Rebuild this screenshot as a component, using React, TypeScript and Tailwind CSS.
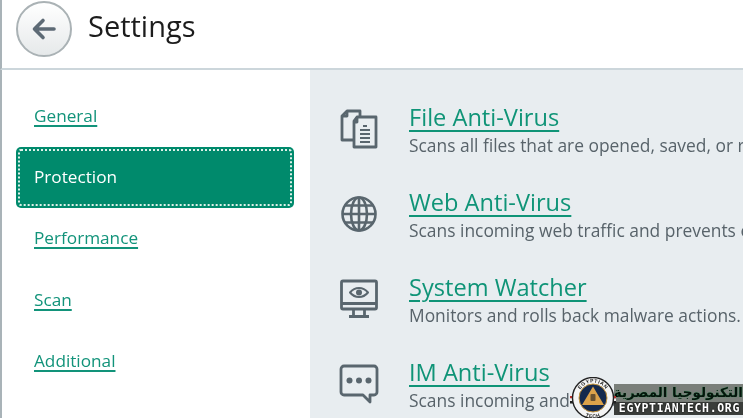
import React from "react";

const font = { fontFamily: '"Open Sans", "Noto Sans", sans-serif' };

function FileIcon() {
  return (
    <svg width="40" height="40" viewBox="0 0 40 40" fill="none" stroke="#59666e" strokeWidth="2.8" strokeLinejoin="round">
      <path d="M14 31H3V7l5-5h13v5" />
      <path d="M8 2v5H3" />
      <path d="M18 8h19v30H15V12z" fill="#e9eef1" />
      <path d="M18 8v5h-3" />
      <path d="M24 17h4M21 21h10M21 25h10M21 29h10M21 33h10" strokeWidth="1.8" />
    </svg>
  );
}
function GlobeIcon() {
  return (
    <svg width="40" height="40" viewBox="0 0 40 40" fill="none" stroke="#59666e" strokeWidth="2.6">
      <circle cx="20" cy="20" r="16.5" />
      <ellipse cx="20" cy="20" rx="8" ry="16.5" />
      <path d="M20 3.5v33M3.5 20h33M6 11.5h28M6 28.5h28" />
    </svg>
  );
}
function MonitorIcon() {
  return (
    <svg width="40" height="40" viewBox="0 0 40 40" fill="none" stroke="#59666e" strokeWidth="2.8" strokeLinejoin="round">
      <rect x="2.5" y="2" width="35" height="28" rx="1.5" />
      <path d="M3 24.5h34M14.5 30v7M25.5 30v7M10 37.5h20" />
      <path d="M11 13.5c5-6 13-6 18 0-5 6-13 6-18 0z" strokeWidth="2" />
      <circle cx="20" cy="13.5" r="3" fill="#59666e" stroke="none" />
    </svg>
  );
}
function ChatIcon() {
  return (
    <svg width="40" height="40" viewBox="0 0 40 40" fill="none" stroke="#59666e" strokeWidth="2.8" strokeLinejoin="round">
      <path d="M5 2h30a3 3 0 0 1 3 3v23a3 3 0 0 1-3 3h-4v7l-7-7H5a3 3 0 0 1-3-3V5a3 3 0 0 1 3-3z" />
      <circle cx="10.5" cy="16.5" r="3" fill="#59666e" stroke="none" />
      <circle cx="20" cy="16.5" r="3" fill="#59666e" stroke="none" />
      <circle cx="29.5" cy="16.5" r="3" fill="#59666e" stroke="none" />
    </svg>
  );
}

function Logo() {
  return (
    <svg width="46" height="42" viewBox="0 0 46 42">
      <rect x="0" y="19" width="46" height="2.5" fill="#b8322e" />
      <rect x="0" y="21.5" width="46" height="2.5" fill="#eee" />
      <rect x="0" y="24" width="46" height="2.5" fill="#222" />
      <circle cx="23" cy="21" r="20.5" fill="#f4f4f4" stroke="#222" strokeWidth="1.4" />
      <defs>
        <path id="ringTop" d="M7.5 21a15.5 15.5 0 0 1 31 0" />
        <path id="ringBottom" d="M6 24a17 17 0 0 0 34 0" />
      </defs>
      <text fontSize="5" fontWeight="700" fill="#222" letterSpacing="0.6" fontFamily="Liberation Sans, sans-serif">
        <textPath href="#ringTop" startOffset="50%" textAnchor="middle">EGYPTIAN</textPath>
      </text>
      <text fontSize="5" fontWeight="700" fill="#222" letterSpacing="0.6" fontFamily="Liberation Sans, sans-serif">
        <textPath href="#ringBottom" startOffset="50%" textAnchor="middle">TECH</textPath>
      </text>
      <circle cx="23" cy="21" r="14" fill="#14294d" stroke="#c9973d" strokeWidth="1" />
      <path d="M23 9.5 34 28H12z" fill="#dca24a" />
      <rect x="20.5" y="17" width="5" height="7" rx="1" fill="#6a5230" />
    </svg>
  );
}

const items = [
  { title: "File Anti-Virus", desc: "Scans all files that are opened, saved, or run", icon: <FileIcon /> },
  { title: "Web Anti-Virus", desc: "Scans incoming web traffic and prevents execution", icon: <GlobeIcon /> },
  { title: "System Watcher", desc: "Monitors and rolls back malware actions.", icon: <MonitorIcon /> },
  { title: "IM Anti-Virus", desc: "Scans incoming and outgoing messages", icon: <ChatIcon /> },
];

const nav = ["Performance", "Scan", "Additional"];

function NavLink({ label }: { label: string }) {
  return (
    <div className="h-[61.5px] flex items-center pl-[32px]">
      <span className="-mt-[1px] text-[17.2px] leading-none text-[#12937a] underline underline-offset-[3px] decoration-[1.5px]">{label}</span>
    </div>
  );
}

export default function App() {
  return (
    <div className="relative w-[743px] h-[418px] overflow-hidden bg-white flex flex-col blur-[0.45px]" style={font}>
      <header className="h-[70px] shrink-0 flex items-center border-b-2 border-b-[#ccd6db] border-l-2 border-l-[#a9b3b8] pl-[14px] gap-[16px]">
        <button className="w-[56px] h-[56px] -mt-[11px] rounded-full border-2 border-[#aab2b5] bg-gradient-to-b from-white to-[#e6e9ea] flex items-center justify-center">
          <svg width="26" height="24" viewBox="0 0 26 24" fill="none" stroke="#5d6a75" strokeWidth="3.6" strokeLinecap="round" strokeLinejoin="round">
            <path d="M23 12H4M12 3.5 3.5 12l8.5 8.5" />
          </svg>
        </button>
        <h1 className="text-[29px] font-medium leading-none -mt-[17px] text-[#1c1c1c]">Settings</h1>
      </header>
      <div className="flex-1 flex min-h-0">
        <aside className="w-[310px] shrink-0 border-l-2 border-l-[#a9b3b8] pt-[15px]">
          <NavLink label="General" />
          <div className="ml-[14px] mr-[16px] h-[61px] rounded-[5px] bg-[#008a6c] p-[2px]">
            <div className="h-full rounded-[3px] border-2 border-dotted border-[#dff1ea] flex items-center pl-[14px]">
              <span className="text-[17.2px] leading-none text-white -mt-[1px]">Protection</span>
            </div>
          </div>
          {nav.map((n) => (
            <NavLink key={n} label={n} />
          ))}
        </aside>
        <main className="flex-1 bg-[#e8edf0] pt-[30.5px] pl-[29px] overflow-hidden flex flex-col gap-[25px]">
          {items.map((it) => (
            <div key={it.title} className="flex h-[60px] items-start">
              <div className="w-[40px] h-[40px] mt-[8px] shrink-0">{it.icon}</div>
              <div className="ml-[30px] whitespace-nowrap">
                <div className="text-[23.6px] leading-[32px] text-[#0f9477] underline underline-offset-[4px] decoration-[2px]">{it.title}</div>
                <div className="text-[17.4px] leading-[24px] text-[#58636a]">{it.desc}</div>
              </div>
            </div>
          ))}
        </main>
      </div>
      <div className="absolute left-[570px] top-[377px] w-[173px] h-[41px]">
        <div className="absolute left-[44px] top-[7px] right-0 h-[31px] flex flex-col items-end">
          <div className="h-[18px] w-full bg-[#7a7f7a] text-[13.5px] leading-[17px] font-bold text-[#06150c] whitespace-nowrap text-center [text-shadow:0_0_1px_#2fa45f]" style={{ fontFamily: '"DejaVu Sans", sans-serif' }} dir="rtl">التكنولوجيا المصرية</div>
          <div className="h-[13px] w-full bg-[#3b3e3b] pr-[3px] text-right text-white text-[11.5px] leading-[13px] font-bold tracking-[0.65px] whitespace-nowrap [text-shadow:0_0_2px_#000]" style={{ fontFamily: '"DejaVu Sans Mono", monospace' }}>EGYPTIANTECH.ORG</div>
        </div>
        <div className="absolute left-0 top-0">
          <Logo />
        </div>
      </div>
    </div>
  );
}
